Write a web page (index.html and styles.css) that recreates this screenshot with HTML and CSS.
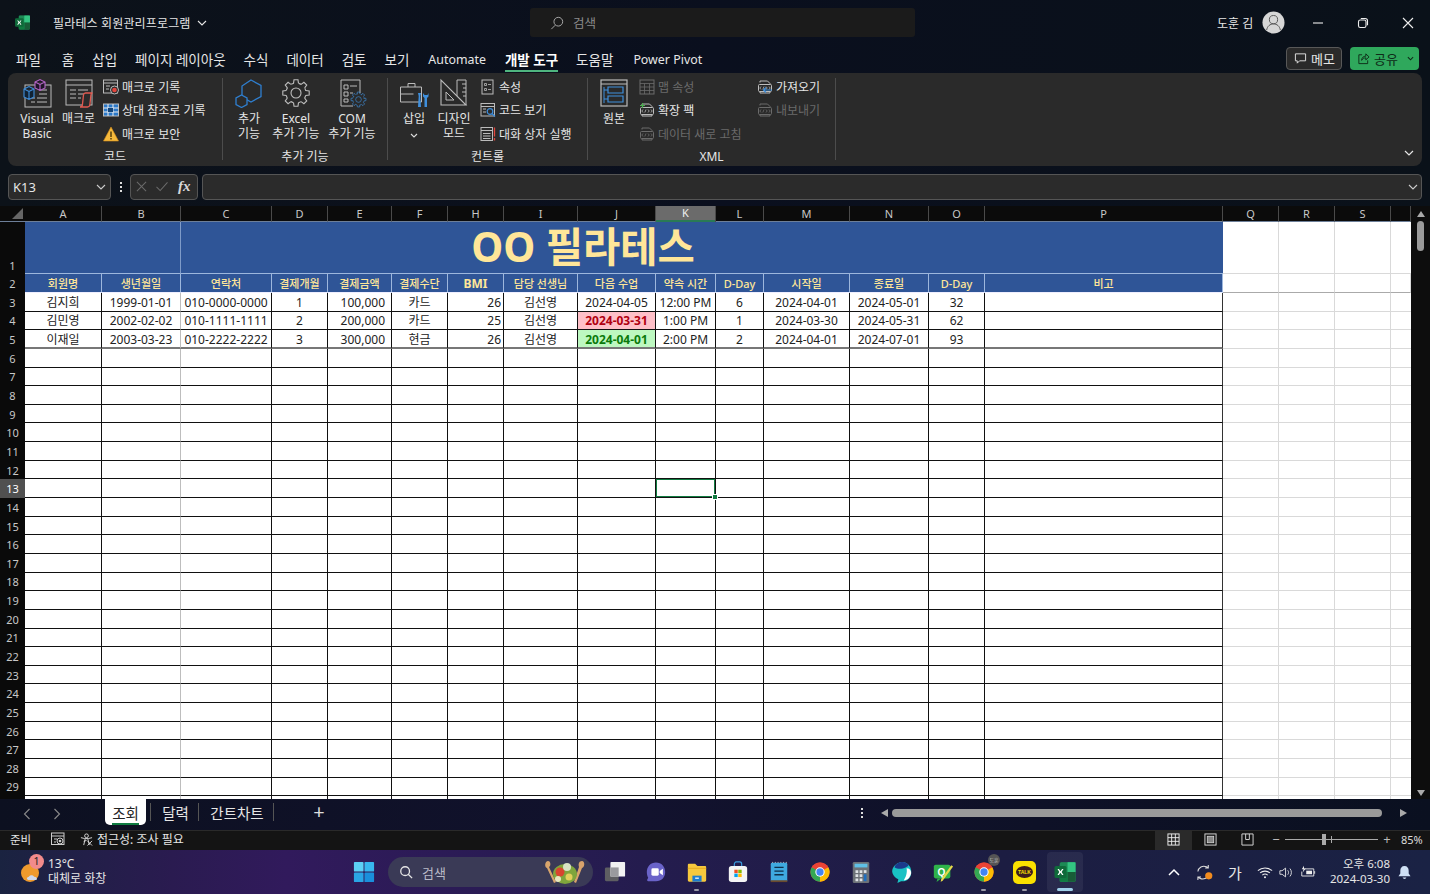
FILE: index.html
```
<!DOCTYPE html>
<html lang="ko">
<head>
<meta charset="utf-8">
<title>필라테스 회원관리프로그램 - Excel</title>
<link rel="stylesheet" href="styles.css">
</head>
<body>
<svg class="sprite" aria-hidden="true">
  <symbol id="excel" viewBox="0 0 32 32">
    <rect x="9" y="3" width="21" height="26" rx="2" fill="#21a366"/>
    <rect x="9" y="3" width="10.5" height="13" fill="#185c37" opacity=".35"/>
    <rect x="19.5" y="3" width="10.5" height="13" fill="#33c481"/>
    <rect x="9" y="16" width="10.5" height="13" fill="#107c41"/>
    <rect x="19.5" y="16" width="10.5" height="13" fill="#185c37"/>
    <rect x="2" y="8" width="16" height="16" rx="2" fill="#0f6a3a"/>
    <path d="M6 12l2.400 4L6 20h1.900L10 16.900 12.100 20H14l-2.500-4L14 12h-1.900L10 15 7.900 12z" fill="#fff"/>
  </symbol>
  <symbol id="gear" viewBox="0 0 30 30">
    <circle cx="15" cy="15" r="10" fill="none" stroke="currentColor" stroke-width="1.100" stroke-dasharray="2.850 5" stroke-dashoffset="-2.500"/>
    <circle cx="15" cy="15" r="5" fill="none" stroke="currentColor" stroke-width="1.100"/>
    <g fill="none" stroke="currentColor" stroke-width="1.100">
      <path d="M12.500 5.300L13 1.800h4l.5 3.500"/>
      <path d="M12.500 5.300L13 1.800h4l.5 3.500" transform="rotate(45 15 15)"/>
      <path d="M12.500 5.300L13 1.800h4l.5 3.500" transform="rotate(90 15 15)"/>
      <path d="M12.500 5.300L13 1.800h4l.5 3.500" transform="rotate(135 15 15)"/>
      <path d="M12.500 5.300L13 1.800h4l.5 3.500" transform="rotate(180 15 15)"/>
      <path d="M12.500 5.300L13 1.800h4l.5 3.500" transform="rotate(225 15 15)"/>
      <path d="M12.500 5.300L13 1.800h4l.5 3.500" transform="rotate(270 15 15)"/>
      <path d="M12.500 5.300L13 1.800h4l.5 3.500" transform="rotate(315 15 15)"/>
    </g>
  </symbol>
  <symbol id="chrome" viewBox="0 0 32 32">
    <circle cx="16" cy="16" r="14" fill="#ea4335"/>
    <path d="M16 16L28.100 9A14 14 0 0 1 16 30z" fill="#fbbc04"/>
    <path d="M16 16L16 30A14 14 0 0 1 3.900 9z" fill="#34a853"/>
    <path d="M3.900 9A14 14 0 0 1 28.100 9H16z" fill="#ea4335"/>
    <circle cx="16" cy="16" r="6.800" fill="#fff"/>
    <circle cx="16" cy="16" r="5.300" fill="#4285f4"/>
  </symbol>
  <symbol id="xmlpack" viewBox="0 0 16 16">
    <path d="M3 3.500V2h7.500l2.500 2.500v1" fill="none" stroke="currentColor"/>
    <rect x="1.500" y="5.500" width="13" height="7" rx="1" fill="none" stroke="currentColor"/>
    <path d="M4 7.500l-1.200 1.500L4 10.500M7 7.500L5.800 10.500M9 7.500l1.200 1.500L9 10.500M12 7.500l1.200 1.500-1.200 1.500" fill="none" stroke="currentColor" stroke-width=".8"/>
    <path d="M3 12.500V14h10v-1.500" fill="none" stroke="currentColor"/>
  </symbol>
</svg>

<header class="titlebar">
  <svg class="app-logo"><use href="#excel"/></svg>
  <div class="doc-title">필라테스 회원관리프로그램</div>
  <svg class="doc-chev" viewBox="0 0 10 6"><path d="M1 1l4 4 4-4" fill="none" stroke="#e6e6e6" stroke-width="1.100"/></svg>
  <div class="searchbox">
    <svg class="search-ico" viewBox="0 0 16 16"><circle cx="9.500" cy="6.500" r="5" fill="none" stroke="#aaa" stroke-width="1.100"/><path d="M6 10.500L1.500 15" stroke="#aaa" stroke-width="1.100"/></svg>
    <span>검색</span>
  </div>
  <div class="account">도훈 김</div>
  <svg class="avatar" viewBox="0 0 24 24"><circle cx="12" cy="12" r="11.500" fill="#d6d6d6"/><circle cx="12" cy="9" r="4.300" fill="none" stroke="#555" stroke-width="1"/><path d="M4.800 20c.8-4.300 3.600-6.500 7.200-6.500s6.400 2.200 7.200 6.500" fill="none" stroke="#555" stroke-width="1"/></svg>
  <div class="winbtns">
    <svg viewBox="0 0 12 12"><path d="M1 6h10" stroke="#eee" stroke-width="1.100"/></svg>
    <svg viewBox="0 0 12 12"><rect x="1.500" y="3" width="7.500" height="7.500" rx="1.800" fill="none" stroke="#eee" stroke-width="1.100"/><path d="M3.800 1.500h4.400c1.500 0 2.300.8 2.300 2.300v4.400" fill="none" stroke="#eee" stroke-width="1.100"/></svg>
    <svg viewBox="0 0 12 12"><path d="M1 1l10 10M11 1L1 11" stroke="#eee" stroke-width="1.100"/></svg>
  </div>
</header>

<nav class="menubar">
  <span class="first">파일</span><span>홈</span><span>삽입</span><span>페이지 레이아웃</span><span>수식</span><span>데이터</span><span>검토</span><span>보기</span><span class="latin">Automate</span><span class="active">개발 도구</span><span>도움말</span><span class="latin pp">Power Pivot</span>
  <div class="menu-actions">
    <div class="memo"><svg viewBox="0 0 14 14"><path d="M1.500 2h11v7.500H6L3.500 12V9.500h-2z" fill="none" stroke="#e6e6e6"/></svg>메모</div>
    <div class="share"><svg viewBox="0 0 14 14"><path d="M5.500 3H2v9.500h9.500V9" fill="none" stroke="#0e2b18"/><path d="M5 9c0-3 2-4.500 4.500-4.500V2l3.500 3.300-3.500 3.200V6.300C7.500 6.300 6 7 5 9z" fill="none" stroke="#0e2b18"/></svg>공유<svg class="share-chev" viewBox="0 0 8 5"><path d="M1 1l3 3 3-3" fill="none" stroke="#0e2b18" stroke-width="1.200"/></svg></div>
  </div>
</nav>

<section class="ribbon">
  <div class="group g1">
    <div class="group-body">
      <div class="big w42">
        <svg viewBox="0 0 30 30"><rect x="3" y="7" width="26" height="22" fill="none" stroke="#bbb"/><path d="M9 20h4M15 20h10M9 24h4M15 24h10M17 12h8M17 16h8" stroke="#bbb"/><path d="M2 11l5-2.500 5 2.500v8l-5 2.500-5-2.500zM2 11l5 2.500 5-2.500M7 13.500v8" fill="#123" stroke="#3f8fdc" stroke-width="1.100"/><path d="M13 4l5-2.500 5 2.500v6l-5 2.500-5-2.500zM13 4l5 2.500 5-2.500M18 6.500v6" fill="#201428" stroke="#b565c8" stroke-width="1.100"/></svg>
        <span>Visual<br>Basic</span>
      </div>
      <div class="big w41">
        <svg viewBox="0 0 30 30"><rect x="2" y="2" width="26" height="25" fill="#2b2b2b" stroke="#bbb"/><path d="M2 7h26M6 12h6M14 12h10M6 16h6M14 16h6M6 20h6M14 20h3" stroke="#bbb"/><path d="M16 29c2 0 2.500-1.500 2.500-3l1-9c.2-1.200 1-2 2-2h7c-1 0-1.500 1-1.600 2l-1 9.500c-.2 1.500-1.200 2.500-2.400 2.500z" fill="#2b2b2b" stroke="#e25a50" stroke-width="1.300"/></svg>
        <span>매크로</span>
      </div>
      <div class="stack s-g1">
        <div class="small"><svg viewBox="0 0 16 16"><rect x=".5" y="1" width="14" height="13" fill="none" stroke="#bbb"/><path d="M.5 4h14M3 7h4M3 10h3" stroke="#bbb"/><circle cx="11.500" cy="11" r="4" fill="#2b2b2b" stroke="#bbb"/><circle cx="11.500" cy="11" r="2.300" fill="#e2453c"/></svg><span>매크로 기록</span></div>
        <div class="small"><svg viewBox="0 0 16 16"><rect x=".5" y="2" width="15" height="12" fill="#2b79c9" stroke="#bbb"/><path d="M5 2v12M10 2v12M.5 6h15M.5 10h15" stroke="#eee"/><rect x="5" y="6" width="5" height="4" fill="#15467a"/></svg><span>상대 참조로 기록</span></div>
        <div class="small"><svg viewBox="0 0 16 16"><path d="M8 1l7.500 14H.5z" fill="#f5b93c" stroke="#d68f1a" stroke-width=".6"/><path d="M8 5.500v5.500M8 12v1.500" stroke="#3a2a05" stroke-width="1.300"/></svg><span>매크로 보안</span></div>
      </div>
    </div>
    <div class="glabel">코드</div>
  </div>

  <div class="group g2">
    <div class="group-body">
      <div class="big w44">
        <svg viewBox="0 0 30 30"><path d="M17 2l10 5.500v11L17 24l-9-5V8z" fill="none" stroke="#2f7fd0" stroke-width="1.300"/><path d="M7.500 17l5.500 3v6.500L7.500 29.500 2 26.500V20z" fill="#2b2b2b" stroke="#2f7fd0" stroke-width="1.300"/></svg>
        <span>추가<br>기능</span>
      </div>
      <div class="big w50">
        <svg class="gray" viewBox="0 0 30 30"><use href="#gear"/></svg>
        <span>Excel<br>추가 기능</span>
      </div>
      <div class="big w62">
        <svg viewBox="0 0 30 30"><path d="M16 28H4V2h19v13" fill="none" stroke="#bbb"/><path d="M7 7h4v4H7zM7 14h4v4H7zM7 21h4v3H7zM13 8h7M13 15h3" fill="none" stroke="#bbb"/><svg class="inner-blue" x="13" y="13" width="17" height="17" viewBox="0 0 30 30"><use href="#gear"/></svg></svg>
        <span>COM<br>추가 기능</span>
      </div>
    </div>
    <div class="glabel">추가 기능</div>
  </div>

  <div class="group g3">
    <div class="group-body">
      <div class="big w40">
        <svg viewBox="0 0 30 30"><path d="M1.500 9h21v15h-21zM1.500 16h13M9 9V5.500h7V9" fill="none" stroke="#bbb"/><path d="M19 15l.7 3-.7 11h3l-.7-11 .7-3" fill="#3f8fdc"/><path d="M24 15v3.500l1.500 1.500v9h2.500v-9l1.500-1.500V15l-1 2h-3z" fill="#3f8fdc"/></svg>
        <span>삽입<br><svg class="mini-chev" viewBox="0 0 8 5"><path d="M1 1l3 3 3-3" fill="none" stroke="#ddd" stroke-width="1.100"/></svg></span>
      </div>
      <div class="big w40">
        <svg viewBox="0 0 30 30"><path d="M2 2v25h25z" fill="none" stroke="#bbb" stroke-width="1.100"/><path d="M7 14v8h8z" fill="none" stroke="#bbb"/><path d="M18 2h9v25M18 2v16M23 6h4M24 10h3M23 14h4M24 18h3" fill="none" stroke="#bbb"/></svg>
        <span>디자인<br>모드</span>
      </div>
      <div class="stack s-g3">
        <div class="small"><svg viewBox="0 0 16 16"><rect x="2" y="1" width="11" height="14" fill="none" stroke="#bbb"/><path d="M4.500 4.500h2v2h-2zM4.500 9.500h2v2h-2zM8 5.500h3M8 10.500h3" fill="none" stroke="#bbb" stroke-width=".8"/></svg><span>속성</span></div>
        <div class="small"><svg viewBox="0 0 16 16"><rect x="1" y="1.500" width="13.500" height="12.500" fill="none" stroke="#bbb"/><path d="M1 4.500h13.500M3 7h3M3 10h3" stroke="#bbb"/><circle cx="10" cy="9.500" r="2.800" fill="#2b2b2b" stroke="#3f8fdc" stroke-width="1.200"/><path d="M12 11.500l3 3" stroke="#3f8fdc" stroke-width="1.400"/></svg><span>코드 보기</span></div>
        <div class="small"><svg viewBox="0 0 16 16"><rect x="1" y="1.500" width="11.500" height="13" fill="none" stroke="#bbb"/><path d="M1 4.500h11.500M3 7.500h7.500M3 10h7.500M3 12.500h7.500" stroke="#bbb"/><path d="M14.500 1.500v9M14.500 12v2.500" stroke="#e2453c" stroke-width="1.300"/></svg><span>대화 상자 실행</span></div>
      </div>
    </div>
    <div class="glabel">컨트롤</div>
  </div>

  <div class="group g4">
    <div class="group-body">
      <div class="big w40">
        <svg viewBox="0 0 30 30"><rect x="2" y="2" width="26" height="26" fill="none" stroke="#bbb" stroke-width="1.200"/><path d="M2 6h26" stroke="#bbb"/><path d="M5 9v16" stroke="#3f8fdc"/><path d="M9 9h15v6H9zM9 18h15v6H9zM5 12h4M5 21h4" fill="none" stroke="#3f8fdc" stroke-width="1.200"/></svg>
        <span>원본</span>
      </div>
      <div class="stack s-g4a">
        <div class="small dim"><svg viewBox="0 0 16 16"><rect x="1" y="1" width="14" height="14" fill="none" stroke="currentColor"/><path d="M1 4.500h14M1 8h14M1 11.500h14M5.500 4.500V15M10.500 4.500V15" stroke="currentColor" stroke-width=".8"/></svg><span>맵 속성</span></div>
        <div class="small"><svg class="gray" viewBox="0 0 16 16"><use href="#xmlpack"/><path d="M3.500 1v5M1 3.500h5" stroke="#4caf50" stroke-width="1.200"/></svg><span>확장 팩</span></div>
        <div class="small dim"><svg viewBox="0 0 16 16"><use href="#xmlpack"/></svg><span>데이터 새로 고침</span></div>
      </div>
      <div class="stack">
        <div class="small"><svg class="gray" viewBox="0 0 16 16"><use href="#xmlpack"/><path d="M15 11H6.500M9 8.500L6.500 11 9 13.500" fill="none" stroke="#3f8fdc" stroke-width="1.200"/></svg><span>가져오기</span></div>
        <div class="small dim"><svg viewBox="0 0 16 16"><use href="#xmlpack"/></svg><span>내보내기</span></div>
      </div>
    </div>
    <div class="glabel">XML</div>
  </div>
  <svg class="ribbon-chev" viewBox="0 0 10 6"><path d="M1 1l4 4 4-4" fill="none" stroke="#e6e6e6" stroke-width="1.200"/></svg>
</section>

<section class="formula">
  <div class="namebox"><span>K13</span><svg viewBox="0 0 10 6"><path d="M1 1l4 4 4-4" fill="none" stroke="#ccc" stroke-width="1.100"/></svg></div>
  <div class="dots"><i></i><i></i><i></i></div>
  <div class="fxbox">
    <svg viewBox="0 0 12 12"><path d="M1 1l10 10M11 1L1 11" stroke="#6b6b6b" stroke-width="1.100"/></svg>
    <svg viewBox="0 0 14 12"><path d="M1 6.500L5 10.500 13 1.500" fill="none" stroke="#6b6b6b" stroke-width="1.100"/></svg>
    <span class="fx">fx</span>
  </div>
  <div class="input"><svg viewBox="0 0 10 6"><path d="M1 1l4 4 4-4" fill="none" stroke="#ccc" stroke-width="1.100"/></svg></div>
</section>

<main class="sheet">
  <div class="sheet-view">
    <table class="grid">
      <colgroup><col class="c25"><col class="c77"><col class="c79"><col class="c91"><col class="c56"><col class="c64"><col class="c56"><col class="c56"><col class="c74"><col class="c78"><col class="c60"><col class="c48"><col class="c86"><col class="c79"><col class="c56"><col class="c238"><col class="c56"><col class="c56"><col class="c56"><col class="c20"></colgroup>
      <thead>
        <tr><th class="corner"><i></i></th><th>A</th><th>B</th><th>C</th><th>D</th><th>E</th><th>F</th><th>H</th><th>I</th><th>J</th><th class="cur">K</th><th>L</th><th>M</th><th>N</th><th>O</th><th>P</th><th>Q</th><th>R</th><th>S</th><th></th></tr>
      </thead>
      <tbody>
        <tr class="h1"><th>1</th><td colspan="2" class="blue"></td><td colspan="12" class="blue bigtitle">OO 필라테스</td><td class="blue"></td><td></td><td></td><td></td><td></td></tr>
        <tr class="h2"><th>2</th><td>회원명</td><td>생년월일</td><td>연락처</td><td>결제개월</td><td>결제금액</td><td>결제수단</td><td class="bmi">BMI</td><td>담당 선생님</td><td>다음 수업</td><td>약속 시간</td><td>D-Day</td><td>시작일</td><td>종료일</td><td>D-Day</td><td>비고</td><td></td><td></td><td></td><td></td></tr>
        <tr><th>3</th><td>김지희</td><td>1999-01-01</td><td>010-0000-0000</td><td>1</td><td class="money">100,000</td><td>카드</td><td class="num">26</td><td>김선영</td><td>2024-04-05</td><td>12:00 PM</td><td>6</td><td>2024-04-01</td><td>2024-05-01</td><td>32</td><td></td><td></td><td></td><td></td><td></td></tr>
        <tr><th>4</th><td>김민영</td><td>2002-02-02</td><td>010-1111-1111</td><td>2</td><td class="money">200,000</td><td>카드</td><td class="num">25</td><td>김선영</td><td class="bad">2024-03-31</td><td>1:00 PM</td><td>1</td><td>2024-03-30</td><td>2024-05-31</td><td>62</td><td></td><td></td><td></td><td></td><td></td></tr>
        <tr class="last"><th>5</th><td>이재일</td><td>2003-03-23</td><td>010-2222-2222</td><td>3</td><td class="money">300,000</td><td>현금</td><td class="num">26</td><td>김선영</td><td class="good">2024-04-01</td><td>2:00 PM</td><td>2</td><td>2024-04-01</td><td>2024-07-01</td><td>93</td><td></td><td></td><td></td><td></td><td></td></tr>
        <tr><th>6</th><td></td><td></td><td></td><td></td><td></td><td></td><td></td><td></td><td></td><td></td><td></td><td></td><td></td><td></td><td></td><td></td><td></td><td></td><td></td></tr>
        <tr><th>7</th><td></td><td></td><td></td><td></td><td></td><td></td><td></td><td></td><td></td><td></td><td></td><td></td><td></td><td></td><td></td><td></td><td></td><td></td><td></td></tr>
        <tr><th>8</th><td></td><td></td><td></td><td></td><td></td><td></td><td></td><td></td><td></td><td></td><td></td><td></td><td></td><td></td><td></td><td></td><td></td><td></td><td></td></tr>
        <tr><th>9</th><td></td><td></td><td></td><td></td><td></td><td></td><td></td><td></td><td></td><td></td><td></td><td></td><td></td><td></td><td></td><td></td><td></td><td></td><td></td></tr>
        <tr><th>10</th><td></td><td></td><td></td><td></td><td></td><td></td><td></td><td></td><td></td><td></td><td></td><td></td><td></td><td></td><td></td><td></td><td></td><td></td><td></td></tr>
        <tr><th>11</th><td></td><td></td><td></td><td></td><td></td><td></td><td></td><td></td><td></td><td></td><td></td><td></td><td></td><td></td><td></td><td></td><td></td><td></td><td></td></tr>
        <tr><th>12</th><td></td><td></td><td></td><td></td><td></td><td></td><td></td><td></td><td></td><td></td><td></td><td></td><td></td><td></td><td></td><td></td><td></td><td></td><td></td></tr>
        <tr><th class="cur">13</th><td></td><td></td><td></td><td></td><td></td><td></td><td></td><td></td><td></td><td class="sel"></td><td></td><td></td><td></td><td></td><td></td><td></td><td></td><td></td><td></td></tr>
        <tr><th>14</th><td></td><td></td><td></td><td></td><td></td><td></td><td></td><td></td><td></td><td></td><td></td><td></td><td></td><td></td><td></td><td></td><td></td><td></td><td></td></tr>
        <tr><th>15</th><td></td><td></td><td></td><td></td><td></td><td></td><td></td><td></td><td></td><td></td><td></td><td></td><td></td><td></td><td></td><td></td><td></td><td></td><td></td></tr>
        <tr><th>16</th><td></td><td></td><td></td><td></td><td></td><td></td><td></td><td></td><td></td><td></td><td></td><td></td><td></td><td></td><td></td><td></td><td></td><td></td><td></td></tr>
        <tr><th>17</th><td></td><td></td><td></td><td></td><td></td><td></td><td></td><td></td><td></td><td></td><td></td><td></td><td></td><td></td><td></td><td></td><td></td><td></td><td></td></tr>
        <tr><th>18</th><td></td><td></td><td></td><td></td><td></td><td></td><td></td><td></td><td></td><td></td><td></td><td></td><td></td><td></td><td></td><td></td><td></td><td></td><td></td></tr>
        <tr><th>19</th><td></td><td></td><td></td><td></td><td></td><td></td><td></td><td></td><td></td><td></td><td></td><td></td><td></td><td></td><td></td><td></td><td></td><td></td><td></td></tr>
        <tr><th>20</th><td></td><td></td><td></td><td></td><td></td><td></td><td></td><td></td><td></td><td></td><td></td><td></td><td></td><td></td><td></td><td></td><td></td><td></td><td></td></tr>
        <tr><th>21</th><td></td><td></td><td></td><td></td><td></td><td></td><td></td><td></td><td></td><td></td><td></td><td></td><td></td><td></td><td></td><td></td><td></td><td></td><td></td></tr>
        <tr><th>22</th><td></td><td></td><td></td><td></td><td></td><td></td><td></td><td></td><td></td><td></td><td></td><td></td><td></td><td></td><td></td><td></td><td></td><td></td><td></td></tr>
        <tr><th>23</th><td></td><td></td><td></td><td></td><td></td><td></td><td></td><td></td><td></td><td></td><td></td><td></td><td></td><td></td><td></td><td></td><td></td><td></td><td></td></tr>
        <tr><th>24</th><td></td><td></td><td></td><td></td><td></td><td></td><td></td><td></td><td></td><td></td><td></td><td></td><td></td><td></td><td></td><td></td><td></td><td></td><td></td></tr>
        <tr><th>25</th><td></td><td></td><td></td><td></td><td></td><td></td><td></td><td></td><td></td><td></td><td></td><td></td><td></td><td></td><td></td><td></td><td></td><td></td><td></td></tr>
        <tr><th>26</th><td></td><td></td><td></td><td></td><td></td><td></td><td></td><td></td><td></td><td></td><td></td><td></td><td></td><td></td><td></td><td></td><td></td><td></td><td></td></tr>
        <tr><th>27</th><td></td><td></td><td></td><td></td><td></td><td></td><td></td><td></td><td></td><td></td><td></td><td></td><td></td><td></td><td></td><td></td><td></td><td></td><td></td></tr>
        <tr><th>28</th><td></td><td></td><td></td><td></td><td></td><td></td><td></td><td></td><td></td><td></td><td></td><td></td><td></td><td></td><td></td><td></td><td></td><td></td><td></td></tr>
        <tr><th>29</th><td></td><td></td><td></td><td></td><td></td><td></td><td></td><td></td><td></td><td></td><td></td><td></td><td></td><td></td><td></td><td></td><td></td><td></td><td></td></tr>
        <tr><th></th><td></td><td></td><td></td><td></td><td></td><td></td><td></td><td></td><td></td><td></td><td></td><td></td><td></td><td></td><td></td><td></td><td></td><td></td><td></td></tr>
      </tbody>
    </table>
  </div>
  <div class="vscroll"><i class="tri-up"></i><b class="vthumb"></b><i class="tri-down"></i></div>
</main>

<section class="sheetbar">
  <div class="sheet-arrows">
    <svg viewBox="0 0 8 12"><path d="M6.500 1L1.500 6l5 5" fill="none" stroke="#8a8a8a" stroke-width="1.100"/></svg>
    <svg viewBox="0 0 8 12"><path d="M1.500 1l5 5-5 5" fill="none" stroke="#8a8a8a" stroke-width="1.100"/></svg>
  </div>
  <div class="tab on"><span>조회</span></div>
  <div class="tab t2">달력</div>
  <div class="tab t3">간트차트</div>
  <div class="addsheet">+</div>
  <div class="hbar">
    <div class="dots"><i></i><i></i><i></i></div>
    <i class="tri-left"></i>
    <b class="hthumb"></b>
    <i class="tri-right"></i>
  </div>
</section>

<footer class="status">
  <span class="ready">준비</span>
  <svg class="st-macro" viewBox="0 0 14 14"><rect x=".5" y="1" width="12.500" height="11.500" fill="none" stroke="#ccc"/><path d="M.5 4h12.500M3 7h3M3 10h2" stroke="#ccc"/><circle cx="9" cy="9" r="3" fill="#141414" stroke="#ccc"/><circle cx="9" cy="9" r="1.300" fill="#ccc"/></svg>
  <svg class="st-acc" viewBox="0 0 14 14"><circle cx="7" cy="3" r="2" fill="none" stroke="#ddd"/><path d="M1 5l4 1h4l4-1M5.500 6.500L4 13M8.500 6.500L10 13M7 8l-3 1" fill="none" stroke="#ddd"/><path d="M8 8.500l5 5M13 8.500l-5 5" stroke="#ddd"/></svg>
  <span class="acc-text">접근성: 조사 필요</span>
  <div class="views">
    <div class="view on"><svg viewBox="0 0 14 14"><rect x="1" y="1" width="12" height="12" fill="none" stroke="#eee"/><path d="M5 1v12M9 1v12M1 5h12M1 9h12" stroke="#eee"/></svg></div>
    <div class="view"><svg viewBox="0 0 14 14"><rect x="1" y="1" width="12" height="12" fill="none" stroke="#ddd"/><rect x="3.500" y="3.500" width="7" height="7" fill="#888" stroke="#ddd" stroke-width=".8"/></svg></div>
    <div class="view"><svg viewBox="0 0 14 14"><path d="M1 1h12v12H1zM5 1v6h4V1" fill="none" stroke="#ddd"/></svg></div>
  </div>
  <div class="zoomer">
    <span class="zm">−</span>
    <div class="track"><i class="mark"></i><i class="knob"></i></div>
    <span class="zm">+</span>
    <span class="pct">85%</span>
  </div>
</footer>

<footer class="taskbar">
  <div class="weather">
    <div class="wicon"><span class="badge">1</span><svg viewBox="0 0 22 22"><circle cx="10" cy="12" r="9" fill="#ef9a2d"/><path d="M9 19c-2.500 0-3-3 0-3.300.5-2 4.500-2 5 0 3-.3 4 3.300 1.500 3.300z" fill="#cfd8ea"/></svg></div>
    <div class="wtext"><span>13°C</span><span>대체로 화창</span></div>
  </div>
  <div class="start"><svg viewBox="0 0 24 24"><rect x="1" y="1" width="10.500" height="10.500" rx="1" fill="#5cd0f5"/><rect x="12.500" y="1" width="10.500" height="10.500" rx="1" fill="#38b6ee"/><rect x="1" y="12.500" width="10.500" height="10.500" rx="1" fill="#2aa5e6"/><rect x="12.500" y="12.500" width="10.500" height="10.500" rx="1" fill="#1a8fdc"/></svg></div>
  <div class="tsearch">
    <svg class="tsearch-ico" viewBox="0 0 16 16"><circle cx="7" cy="7" r="5" fill="none" stroke="#e6e6e6" stroke-width="1.500"/><path d="M10.500 10.500L15 15" stroke="#e6e6e6" stroke-width="1.500"/></svg>
    <span>검색</span>
    <svg class="salad" viewBox="0 0 46 26"><path d="M6 2c3 0 3 5 1 6l7 15-2 1L5 9C2 8 3 2 6 2zM40 2c3 0 3 6 0 7l-6 15-2-1 5-15c-1-3 0-6 3-6z" fill="#d8a46c"/><ellipse cx="23" cy="15" rx="12" ry="10" fill="#7fa53c"/><circle cx="18" cy="13" r="4.500" fill="#d8452f"/><circle cx="27" cy="18" r="3.500" fill="#e2d05a"/><circle cx="25" cy="8" r="4" fill="#d9e2c4"/><circle cx="16" cy="20" r="3" fill="#e8e8c0"/></svg>
  </div>
  <div class="apps">
    <div class="app"><svg viewBox="0 0 24 24"><rect x="1" y="7" width="15" height="15" rx="1.500" fill="#5e5e62"/><rect x="7" y="1" width="16" height="16" rx="1" fill="#f2f2f2"/><rect x="7" y="7" width="9" height="10" fill="#9a9a9e"/></svg></div>
    <div class="app"><svg viewBox="0 0 24 24"><path d="M12 1.500c6 0 10 4.500 10 10.500s-4 10-10 10H3.500c-1 0-1.500-1-1-1.800l1-2C2.500 16.500 2 14.300 2 12 2 6 6 1.500 12 1.500z" fill="#6a63c9"/><rect x="7" y="8" width="8" height="8" rx="1.500" fill="#fff"/><path d="M16 11l3.500-2.500v7L16 13z" fill="#fff"/></svg></div>
    <div class="app dot"><svg viewBox="0 0 24 24"><path d="M2 4.500C2 3.500 2.500 3 3.500 3H10l2.500 2.500h8c1 0 1.500.5 1.500 1.500v14c0 1-.5 1.500-1.500 1.500h-17C2.500 22.500 2 22 2 21z" fill="#f7c83d"/><path d="M2 8h20" stroke="#e5a91f"/><rect x="7" y="16" width="10" height="6.500" fill="#1c7cd0"/><rect x="10" y="18" width="4" height="1.500" fill="#eaf4fb"/></svg></div>
    <div class="app"><svg viewBox="0 0 24 24"><path d="M8 6V3.500C8 2 9 1 10 1h4c1 0 2 1 2 2.500V6" fill="none" stroke="#3a9bdc" stroke-width="1.300"/><rect x="2" y="5.500" width="20" height="17.500" rx="3" fill="#f4f4f4"/><rect x="8" y="9.500" width="3.700" height="3.700" fill="#f25022"/><rect x="12.300" y="9.500" width="3.700" height="3.700" fill="#7fba00"/><rect x="8" y="13.800" width="3.700" height="3.700" fill="#00a4ef"/><rect x="12.300" y="13.800" width="3.700" height="3.700" fill="#ffb900"/></svg></div>
    <div class="app"><svg viewBox="0 0 24 24"><rect x="3" y="2" width="18" height="21" rx="1.500" fill="#3fa9e0"/><rect x="3" y="21" width="18" height="2" fill="#6a4a2e"/><path d="M5 2V1M8 2V1M11 2V1M14 2V1M17 2V1M20 2V1" stroke="#ccc"/><path d="M7 7h10M7 11h10M7 15h10" stroke="#0f2f4a" stroke-width="1.400"/></svg></div>
    <div class="app"><svg viewBox="0 0 32 32"><use href="#chrome"/></svg></div>
    <div class="app"><svg viewBox="0 0 24 24"><rect x="3" y="1" width="18" height="23" rx="1.500" fill="#6d7278"/><rect x="5" y="3" width="14" height="4" fill="#5fc0e6"/><path d="M6 10h3v3H6zM10.500 10h3v3h-3zM6 14.500h3v3H6zM10.500 14.500h3v3h-3zM6 19h3v3H6zM10.500 19h3v3h-3z" fill="#dfe3e6"/><rect x="15" y="10" width="3" height="3" fill="#dfe3e6"/><rect x="15" y="14.500" width="3" height="7.500" fill="#1f6fc0"/></svg></div>
    <div class="app"><svg viewBox="0 0 24 24"><path d="M13 1c6 1 10 6 9 13-1 6-6 9-11 8l-4 2 1-4C2 17 0 12 2 8c2-4 6-7 11-7z" fill="#19c2c4"/><path d="M13 1c-5 0-9 3-9 6 3 2 8 2 12 0 2-1 3-2 3-3-2-2-4-3-6-3z" fill="#1b3a8c"/><path d="M17 8c3 0 5 2 5 5-1 5-4 8-8 8 2-3 4-8 3-13z" fill="#fff"/></svg></div>
    <div class="app"><svg viewBox="0 0 24 24"><rect x="2" y="4" width="18" height="15" rx="2" fill="#2fb24a"/><path d="M6 19l-1 4 5-4z" fill="#2fb24a"/><text x="6" y="16" class="qtxt">Q</text><path d="M23 6L12 21l-2.500 2 .5-3.500L21 4.500z" fill="#e3d94a"/></svg></div>
    <div class="app dot"><svg viewBox="0 0 32 32"><use href="#chrome"/></svg><span class="chrome-badge">도훈</span></div>
    <div class="app dot"><div class="kakao"><span>TALK</span></div></div>
    <div class="app running"><svg viewBox="0 0 32 32"><use href="#excel"/></svg></div>
  </div>
  <div class="tray">
    <svg class="t-up" viewBox="0 0 12 8"><path d="M1 7l5-5 5 5" fill="none" stroke="#fff" stroke-width="1.500"/></svg>
    <svg class="t-sync" viewBox="0 0 18 18"><path d="M2 8c.5-4 5-7 9-5l2 1M13 1v3.300H9.700M13 12c-1 3-5 5-9 3l-2-1M2 17v-3.300h3.300" fill="none" stroke="#ddd" stroke-width="1.100"/><circle cx="13.500" cy="12.500" r="3.800" fill="#f28c1e"/></svg>
    <span class="t-ime">가</span>
    <svg class="t-wifi" viewBox="0 0 18 14"><path d="M1 5c4.500-4 11.500-4 16 0M3.500 7.500c3-2.700 8-2.700 11 0M6 10c1.700-1.400 4.300-1.400 6 0" fill="none" stroke="#eee" stroke-width="1.200"/><circle cx="9" cy="12.300" r="1.100" fill="#eee"/></svg>
    <svg class="t-vol" viewBox="0 0 16 14"><path d="M1 5v4h2.500L7.500 12V2L3.500 5z" fill="none" stroke="#eee"/><path d="M10 4.500c1.200 1.500 1.200 3.500 0 5M12.500 2.500c2.200 2.500 2.200 6.500 0 9" fill="none" stroke="#eee"/></svg>
    <svg class="t-bat" viewBox="0 0 18 14"><path d="M5 3.500h10.500v8H2v-5" fill="none" stroke="#eee"/><rect x="7" y="5.500" width="6.500" height="4" fill="#eee"/><path d="M16.500 6v3" stroke="#eee"/><path d="M4.500 0L2 4h2L3 7.500 6.500 3h-2z" fill="#eee"/></svg>
    <div class="clock"><span>오후 6:08</span><span>2024-03-30</span></div>
    <svg class="t-bell" viewBox="0 0 14 16"><path d="M7 1c3 0 4.500 2.300 4.500 5v3l2 3H.5l2-3V6C2.500 3.300 4 1 7 1z" fill="#cfe0f5"/><path d="M5 13.500c.3 2 3.700 2 4 0z" fill="#cfe0f5"/></svg>
  </div>
</footer>
</body>
</html>
```
FILE: styles.css
```
* { box-sizing: border-box; }
html, body { margin: 0; padding: 0; }
body {
  width: 1430px; height: 894px; overflow: hidden;
  display: flex; flex-direction: column;
  background: linear-gradient(90deg, #0c1219 0%, #0a0f1e 50%, #0a1119 100%);
  color: #e6e6e6;
  font-family: "Noto Sans", "Noto Sans CJK KR", sans-serif;
  font-size: 12px;
}
.sprite { position: absolute; width: 0; height: 0; }
i { font-style: normal; }

/* title bar */
.titlebar { height: 45px; flex: none; display: flex; align-items: center; }
.app-logo { width: 17px; height: 17px; margin-left: 14px; flex: none; }
.doc-title { margin-left: 22px; font-size: 12px; letter-spacing: .15px; width: 139px; white-space: nowrap; }
.doc-chev { width: 10px; height: 6px; margin-left: 5px; }
.searchbox {
  margin-left: 323px; width: 385px; height: 29px; background: #1b1b1b; border-radius: 3px;
  display: flex; align-items: center; color: #8c8c8c; font-size: 12.500px;
}
.search-ico { width: 14px; height: 14px; margin: 0 9px 0 20px; }
.account { margin-left: 302px; width: 45px; font-size: 12px; white-space: nowrap; }
.avatar { width: 23px; height: 23px; }
.winbtns { display: flex; margin-left: 27px; gap: 33px; align-items: center; }
.winbtns svg { width: 12px; height: 12px; }

/* menu */
.menubar { height: 28px; flex: none; display: flex; align-items: center; padding-left: 16px; gap: 18px; font-size: 13.500px; white-space: nowrap; }
.menubar > span { line-height: 20px; margin-top: 3px; height: 22px; }
.menubar .first { margin-right: 3px; }
.menubar .latin { font-size: 12.400px; margin-left: 1px; margin-right: 1px; }
.menubar .pp { margin-left: 2px; }
.menubar .active { font-weight: 700; color: #fff; box-shadow: inset 0 -2px 0 #4fb57f; }
.menu-actions { margin-left: auto; margin-right: 11px; margin-top: -2px; display: flex; gap: 8px; }
.memo, .share { height: 23px; border-radius: 4px; display: flex; align-items: center; font-size: 13px; }
.memo { width: 56px; background: #2a2a2a; border: 1px solid #585858; padding-left: 7px; }
.memo svg { width: 13px; height: 13px; margin-right: 4px; }
.share { width: 69px; background: #2fa85c; color: #0e2b18; padding-left: 7px; }
.share svg { width: 13px; height: 13px; margin-right: 4px; }
.share .share-chev { width: 7px; height: 5px; margin: 0 0 0 9px; }

/* ribbon */
.ribbon { height: 93px; flex: none; margin: 0 8px; background: #2a2a2a; border-radius: 8px; display: flex; align-items: flex-start; font-size: 12px; }
.group { height: 82px; margin-top: 5px; border-right: 1px solid #4c4c4c; display: flex; flex-direction: column; justify-content: space-between; flex: none; }
.g1 { width: 215px; }
.g2 { width: 165px; }
.g3 { width: 200px; }
.g4 { width: 248px; }
.group-body { display: flex; height: 64px; }
.g1 .group-body { padding-left: 8px; }
.g2 .group-body { padding-left: 4px; }
.g3 .group-body, .g4 .group-body { padding-left: 6px; }
.glabel { text-align: center; line-height: 14px; margin-bottom: -4px; font-size: 12px; }
.big { display: flex; flex-direction: column; align-items: center; text-align: center; line-height: 15px; white-space: nowrap; flex: none; }
.big > svg { width: 30px; height: 30px; margin-bottom: 3px; flex: none; }
.w40 { width: 40px; } .w41 { width: 41px; } .w42 { width: 42px; } .w44 { width: 44px; } .w50 { width: 50px; } .w62 { width: 62px; }
.gray { color: #bdbdbd; }
.inner-blue { color: #3f8fdc; }
.mini-chev { width: 8px; height: 5px; }
.stack { display: flex; flex-direction: column; margin-top: -3px; flex: none; height: 71px; }
.s-g1 { margin-left: 4px; }
.s-g3 { margin-left: 6px; }
.s-g4a { margin-left: 5px; width: 118px; }
.small { height: 23.500px; flex: none; display: flex; align-items: center; gap: 3px; white-space: nowrap; }
.small svg { width: 16px; height: 16px; flex: none; }
.small.dim { color: #6b6b6b; }
.ribbon-chev { width: 10px; height: 6px; margin: 77px 8px 0 auto; }

/* formula bar */
.formula { height: 26px; flex: none; margin: 7.500px 8px 0; display: flex; }
.namebox, .fxbox, .input { background: #2b2b2b; border: 1px solid #555; border-radius: 4px; height: 26px; display: flex; align-items: center; }
.namebox { width: 103px; justify-content: space-between; padding: 0 4px 0 4px; font-size: 13px; }
.namebox svg, .input svg { width: 10px; height: 6px; }
.dots { display: flex; flex-direction: column; gap: 2px; width: 19px; align-items: center; justify-content: center; height: 100%; }
.dots i { width: 2px; height: 2px; background: #ddd; }
.fxbox { width: 68px; padding-left: 5px; }
.fxbox svg { width: 11px; height: 11px; margin-right: 8px; }
.fxbox svg + svg { width: 14px; margin-right: 9px; }
.fx { font-family: "Liberation Serif", serif; font-style: italic; font-weight: 700; font-size: 15px; color: #d8d8d8; }
.input { flex: 1; margin-left: 4px; justify-content: flex-end; padding-right: 3px; }

/* sheet */
.sheet { height: 593px; flex: none; margin-top: 6.500px; display: flex; overflow: hidden; background: #0a0a0a; }
.sheet-view { width: 1411px; overflow: hidden; height: 593px; }
.grid { border-collapse: separate; border-spacing: 0; table-layout: fixed; width: 1411px; font-size: 12px; color: #222; background: #fff; }
.c25 { width: 25px; } .c77 { width: 77px; } .c79 { width: 79px; } .c91 { width: 91px; } .c56 { width: 56px; } .c64 { width: 64px; } .c74 { width: 74px; } .c78 { width: 78px; } .c60 { width: 60px; } .c48 { width: 48px; } .c86 { width: 86px; } .c238 { width: 238px; } .c20 { width: 20px; }
.grid tr { height: 18.650px; }
.grid thead tr { height: 16px; }
.grid .h1 { height: 52px; }
.grid .h2 { height: 19px; }
.grid th, .grid td { padding: 0; font-weight: 400; line-height: 15px; white-space: nowrap; overflow: hidden; text-align: center; }
.grid thead th { background: #0b0b0b; color: #c8c8c8; font-size: 11px; line-height: 13px; padding-bottom: 1px; border-right: 1px solid #4a4a4a; border-bottom: 1px solid #6d7f99; vertical-align: middle; overflow: visible; }
.grid thead th.cur { background: #6b6b6b; color: #f0f0f0; box-shadow: inset 0 -2px 0 #2a7a55; border-bottom: none; padding-bottom: 3px; }
.grid thead th.corner { position: relative; border-right: none; }
.corner i { position: absolute; right: 2px; bottom: 2px; width: 0; height: 0; border-left: 11px solid transparent; border-bottom: 11px solid #666; }
.grid tbody th { background: #0a0a0a; color: #c8c8c8; font-size: 11px; }
.grid tbody th.cur { background: #505050; color: #fff; }
.grid .h1 th { vertical-align: bottom; padding-bottom: 1px; }
.grid td { border-right: 1px solid #111; border-bottom: 1px solid #111; vertical-align: middle; padding-top: 1px; }
.grid td:nth-child(3) { border-right-color: #bdbdbd; }
.grid td:nth-last-child(-n+4) { border-right: 1px solid #d9d9d9; border-bottom: 1px solid #d9d9d9; }
.grid td:nth-last-child(5) { border-right-color: #333; }
.grid td:last-child { border-right: none; }
.grid .h1 td.blue { background: #2f5597; border-right: none; border-bottom: 1px solid #9db7dd; padding-top: 0; }
.grid .h1 td.blue:nth-child(2) { border-right: 1px solid #7f9bc8; }
.grid .h1 td.bigtitle { color: #ffe699; font-size: 40.500px; font-weight: 700; line-height: 46px; padding-bottom: 2px; overflow: visible; }
.grid .h2 td { background: #2f5597; color: #ffe699; font-size: 11px; font-weight: 500; border-right: 1px solid #9db7dd; border-bottom: 1px solid #eef; line-height: 14px; }
.grid .h2 td.bmi { font-size: 12px; font-weight: 700; }
.grid .h2 td:nth-last-child(-n+4) { background: #fff; border-right: 1px solid #d9d9d9; border-bottom: 1px solid #aaa; }
.grid .last td { border-bottom: 2px solid #777; }
.grid .last td:nth-last-child(-n+4) { border-bottom: 1px solid #d9d9d9; }
.grid .money { text-align: right; padding-right: 6px; }
.grid .num { text-align: right; padding-right: 2px; }
.grid .bad { background: #ffc0c8; color: #b00010; font-weight: 700; }
.grid .good { background: #bdf8c0; color: #0a7a0a; font-weight: 700; }
.grid td.sel { position: relative; overflow: visible; box-shadow: inset 0 0 0 1px #107c41; }
.sel::after { content: ""; position: absolute; right: -2px; bottom: -2px; width: 4px; height: 4px; background: #107c41; border: 1px solid #fff; box-sizing: content-box; margin: -1px; }
.vscroll { width: 19px; position: relative; background: #0d0d0d; display: flex; flex-direction: column; align-items: center; }
.tri-up { width: 0; height: 0; margin-top: 5px; border: 4.500px solid transparent; border-top: 0; border-bottom: 6px solid #aaa; }
.vthumb { width: 7px; height: 30px; background: #9a9a9a; border-radius: 4px; margin-top: 4px; margin-left: -1px; }
.tri-down { width: 0; height: 0; margin-top: auto; margin-bottom: 3px; border: 4.500px solid transparent; border-bottom: 0; border-top: 6px solid #aaa; }

/* sheet tabs */
.sheetbar { height: 31px; flex: none; display: flex; align-items: flex-start; font-size: 14.500px; background: linear-gradient(90deg, #0c1020, #12122e 45%, #0a1020); }
.sheet-arrows { display: flex; width: 60px; margin-left: 12px; }
.sheet-arrows svg { width: 30px; height: 12px; margin-top: 9px; }
.tab { height: 26px; display: flex; align-items: center; justify-content: center; white-space: nowrap; }
.tab.on { width: 41px; margin-left: 33px; background: #fff; color: #222; border-radius: 0 0 5px 5px; }
.tab.on span { border-bottom: 2px solid #107c41; line-height: 20px; height: 22px; margin-top: 3px; }
.t2, .t3 { margin-top: 4px; height: 18px; border-right: 1px solid #555; }
.t2 { width: 49px; margin-left: 4px; border-left: 1px solid #555; padding-left: 2px; }
.t3 { width: 75px; padding-left: 2px; }
.addsheet { width: 20px; margin-left: 35px; text-align: center; font-size: 20px; line-height: 26px; color: #ddd; }
.hbar { margin-left: auto; margin-right: 23px; display: flex; align-items: center; height: 28px; }
.hbar .dots { width: 18px; gap: 2px; }
.tri-left { width: 0; height: 0; margin-left: 10px; border: 4.500px solid transparent; border-left: 0; border-right: 7px solid #aaa; }
.tri-right { width: 0; height: 0; margin-left: 18px; border: 4.500px solid transparent; border-right: 0; border-left: 7px solid #aaa; }
.hthumb { width: 490px; height: 8px; border-radius: 4px; background: #9a9a9a; margin-left: 4px; }

/* status bar */
.status { height: 20px; flex: none; display: flex; align-items: center; background: #141414; font-size: 11.500px; border-top: 1px solid #2a2a2a; padding-bottom: 3px; }
.ready { margin-left: 10px; width: 35px; }
.st-macro { width: 14px; height: 14px; margin-left: 6px; }
.st-acc { width: 13px; height: 13px; margin-left: 15px; }
.acc-text { margin-left: 4px; font-size: 12px; white-space: nowrap; }
.views { display: flex; margin-left: auto; height: 19px; margin-bottom: -3px; }
.view { width: 37px; display: flex; align-items: center; justify-content: center; padding-bottom: 3px; }
.view.on { background: #2a2a2a; }
.view svg { width: 13px; height: 13px; }
.zoomer { display: flex; align-items: center; margin-left: 5px; margin-right: 3px; width: 156px; }
.zm { width: 10px; text-align: center; color: #bbb; font-size: 13px; line-height: 14px; }
.track { position: relative; width: 93px; height: 1px; background: #aaa; margin: 0 4px; }
.knob { position: absolute; left: 37px; top: -5px; width: 4px; height: 11px; background: #aaa; }
.mark { position: absolute; left: 46px; top: -3px; width: 1px; height: 7px; background: #aaa; }
.pct { margin-left: 9px; font-size: 11px; color: #ddd; }

/* taskbar */
.taskbar { height: 44px; flex: none; display: flex; align-items: center; background: linear-gradient(90deg, #1a2340 0%, #2a1b50 12%, #311a5c 20%, #241c4e 45%, #1c1d42 70%, #1a2244 100%); }
.weather { width: 343px; display: flex; align-items: center; padding-left: 20px; flex: none; }
.wicon { position: relative; width: 22px; height: 22px; margin-right: 6px; }
.wicon svg { width: 22px; height: 22px; }
.badge { position: absolute; left: 9px; top: -7px; width: 15px; height: 15px; border-radius: 50%; background: #f28b8b; color: #222; font-size: 10.500px; line-height: 15px; text-align: center; z-index: 1; }
.wtext { display: flex; flex-direction: column; font-size: 12px; line-height: 15px; margin-top: -3px; }
.start { width: 45px; flex: none; padding-left: 10px; display: flex; align-items: center; }
.start svg { width: 22px; height: 22px; }
.tsearch { width: 205px; height: 30px; flex: none; background: #3a3a56; border-radius: 15px; display: flex; align-items: center; color: #b9b9c6; font-size: 13px; padding-left: 11px; }
.tsearch-ico { width: 14px; height: 14px; margin-right: 9px; }
.salad { width: 46px; height: 26px; margin-left: auto; margin-right: 5px; }
.apps { display: flex; margin-left: 1px; flex: none; }
.app { width: 41px; height: 40px; display: flex; align-items: center; justify-content: center; position: relative; }
.app svg { width: 22px; height: 22px; }
.app.dot::after { content: ""; position: absolute; bottom: 1px; left: 18px; width: 5px; height: 2px; background: #9a9aa8; border-radius: 1px; }
.app.running { background: rgba(255,255,255,.06); border-radius: 4px; width: 36px; margin-left: 2px; }
.app.running svg { width: 24px; height: 24px; }
.app.running::after { content: ""; position: absolute; bottom: 1px; left: 10px; width: 16px; height: 3px; background: #9fd0ea; border-radius: 2px; }
.qtxt { font-family: "Liberation Sans", sans-serif; font-size: 11px; font-weight: 700; fill: #fff; }
.chrome-badge { position: absolute; right: 4px; top: 2px; width: 12px; height: 12px; border-radius: 50%; background: #555; color: #ccc; font-size: 5px; line-height: 12px; text-align: center; }
.kakao { width: 23px; height: 23px; background: #fae100; border-radius: 5px; display: flex; align-items: center; justify-content: center; }
.kakao span { background: #3c1e1e; color: #fae100; border-radius: 50%; font-family: "Liberation Sans", sans-serif; font-size: 5px; font-weight: 700; padding: 3px 2px; line-height: 6px; }
.tray { display: flex; align-items: center; flex: none; margin-left: auto; width: 270px; }
.t-up { width: 12px; height: 8px; margin-left: 8px; }
.t-sync { width: 17px; height: 17px; margin-left: 16px; }
.t-ime { width: 30px; margin-left: 7px; text-align: center; font-size: 15px; }
.t-wifi { width: 16px; height: 13px; margin-left: 7px; }
.t-vol { width: 14px; height: 13px; margin-left: 6px; }
.t-bat { width: 16px; height: 14px; margin-left: 7px; }
.clock { display: flex; flex-direction: column; align-items: flex-end; width: 74px; font-size: 11.500px; line-height: 15px; white-space: nowrap; margin-top: -3px; }
.t-bell { width: 13px; height: 15px; margin-left: 8px; }
```
